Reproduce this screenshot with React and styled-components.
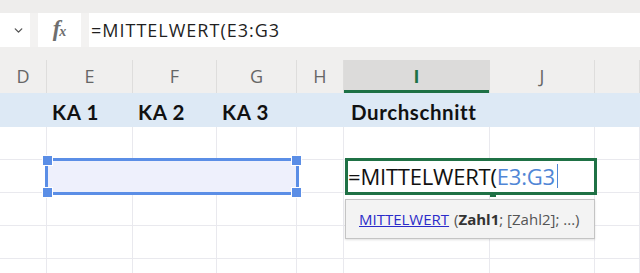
import React from "react";
import styled, { createGlobalStyle } from "styled-components";
import { ChevronDown } from "lucide-react";

const GlobalStyle = createGlobalStyle`
  html, body { margin: 0; padding: 0; background: #fff; }
  body { font-family: "Open Sans", "Noto Sans", sans-serif; }
`;

const COLS = "47px 86px 84px 80px 47px 146px 105px 45px";

const Page = styled.div`
  width: 640px;
  height: 273px;
  overflow: hidden;
  background: #fff;
`;

const TopStrip = styled.div`
  height: 13px;
  background: #eeedec;
`;

const FormulaBar = styled.div`
  height: 34px;
  display: flex;
  gap: 8px;
  background: #f3f2f1;
`;

const NameBox = styled.div`
  width: 30px;
  background: #fff;
  display: flex;
  align-items: center;
  justify-content: flex-end;
  padding-right: 5px;
  box-sizing: border-box;
  color: #555;
`;

const FxBox = styled.div`
  width: 43px;
  background: #fff;
  display: flex;
  align-items: center;
  justify-content: center;
  font-family: "Liberation Serif", serif;
  font-style: italic;
  font-weight: 700;
  color: #6e6e6e;
  font-size: 23px;
  padding-bottom: 3px;
  box-sizing: border-box;
  span { font-size: 14px; margin-left: -1px; position: relative; top: 3px; }
`;

const FormulaInput = styled.div`
  flex: 1;
  background: #fff;
  display: flex;
  align-items: center;
  padding-left: 2px;
  font-size: 18px;
  color: #1f1f1f;
  letter-spacing: 1px;
`;

const HeaderRow = styled.div`
  display: grid;
  grid-template-columns: ${COLS};
  background: #f0efee;
  padding-top: 13px;
  height: 46px;
  box-sizing: border-box;
`;

const ColHead = styled.div`
  display: flex;
  align-items: center;
  justify-content: center;
  font-size: 18px;
  color: ${(p) => (p.$active ? "#1e7145" : "#666")};
  font-weight: ${(p) => (p.$active ? 700 : 400)};
  background: ${(p) => (p.$active ? "#dcdbda" : "transparent")};
  border-right: 1px solid ${(p) => (p.$active ? "transparent" : "#dedddc")};
  box-shadow: ${(p) => (p.$active ? "inset 0 -3px 0 #1e7145" : "none")};
  padding-bottom: 2px;
  box-sizing: border-box;
`;

const Sheet = styled.div`
  display: grid;
  grid-template-columns: ${COLS};
  grid-template-rows: 34px repeat(5, 33px);
`;

const Cell = styled.div`
  border-right: 1px solid #e9e9ee;
  border-bottom: 1px solid #e9e9ee;
  box-sizing: border-box;
`;

const HeadCell = styled.div`
  background: #dde9f5;
  display: flex;
  align-items: center;
  padding: 3px 0 0 ${(p) => (p.$wide ? 7 : 5)}px;
  box-sizing: border-box;
  font-family: "Lato", "Open Sans", sans-serif;
  font-weight: 700;
  font-size: 20.5px;
  letter-spacing: 0.6px;
  color: #111;
  white-space: nowrap;
`;

const Selection = styled.div`
  grid-column: 2 / 5;
  grid-row: 3;
  margin: -2px -2px -2px -2px;
  position: relative;
  border: 3px solid #5b8ee6;
  background: #eef0fc;
  z-index: 2;
`;

const Handle = styled.div`
  position: absolute;
  width: 9px;
  height: 9px;
  background: #5b8ee6;
  border: 1px solid #fff;
  ${(p) => (p.$top ? "top: -6px;" : "bottom: -6px;")}
  ${(p) => (p.$left ? "left: -6px;" : "right: -6px;")}
`;

const Editor = styled.div`
  grid-column: 6 / 8;
  grid-row: 3;
  margin: -2px -2px -2px 1px;
  position: relative;
  border: 3px solid #1f7145;
  background: #fff;
  z-index: 3;
  display: flex;
  align-items: center;
  padding: 0 0 1px 0;
  font-size: 22px;
  color: #111;
  letter-spacing: -0.2px;
  white-space: nowrap;
`;

const Ref = styled.span`
  color: #4f86d6;
`;

const Caret = styled.span`
  display: inline-block;
  width: 1px;
  height: 24px;
  background: #4f86d6;
  margin-left: 2px;
`;

const FillMark = styled.div`
  position: absolute;
  left: 142px;
  bottom: -5px;
  width: 6px;
  height: 3px;
  background: #1f7145;
`;

const Tooltip = styled.div`
  position: absolute;
  left: -3px;
  top: 38px;
  width: 250px;
  height: 40px;
  box-sizing: border-box;
  background: #f3f3f3;
  border: 1px solid #c4c4c4;
  box-shadow: 0 1px 2px rgba(0, 0, 0, 0.12);
  display: flex;
  align-items: center;
  padding-left: 13px;
  font-size: 15px;
  color: #555;
  letter-spacing: 0;
`;

const FnLink = styled.span`
  color: #2b2bc9;
  text-decoration: underline;
  margin-right: 5px;
`;

const Arg = styled.b`
  color: #333;
`;

const columns = ["D", "E", "F", "G", "H", "I", "J", ""];
const headers = ["", "KA 1", "KA 2", "KA 3", "", "Durchschnitt", "", ""];

export default function App() {
  return (
    <Page>
      <GlobalStyle />
      <TopStrip />
      <FormulaBar>
        <NameBox>
          <ChevronDown size={13} strokeWidth={2.5} />
        </NameBox>
        <FxBox>
          f<span>x</span>
        </FxBox>
        <FormulaInput>=MITTELWERT(E3:G3</FormulaInput>
      </FormulaBar>

      <HeaderRow>
        {columns.map((c, i) => (
          <ColHead key={i} $active={c === "I"}>
            {c}
          </ColHead>
        ))}
      </HeaderRow>

      <Sheet>
        {headers.map((h, i) => (
          <HeadCell key={"h" + i} $wide={i === 5}>
            {h}
          </HeadCell>
        ))}
        {Array.from({ length: 5 * 8 }).map((_, i) => (
          <Cell key={i} style={{ gridRow: Math.floor(i / 8) + 2, gridColumn: (i % 8) + 1 }} />
        ))}
        <Selection>
          <Handle $top $left />
          <Handle $top />
          <Handle $left />
          <Handle />
        </Selection>
        <Editor>
          =MITTELWERT(<Ref>E3:G3</Ref>
          <Caret />
          <FillMark />
          <Tooltip>
            <FnLink>MITTELWERT</FnLink>(<Arg>Zahl1</Arg>; [Zahl2]; ...)
          </Tooltip>
        </Editor>
      </Sheet>
    </Page>
  );
}
